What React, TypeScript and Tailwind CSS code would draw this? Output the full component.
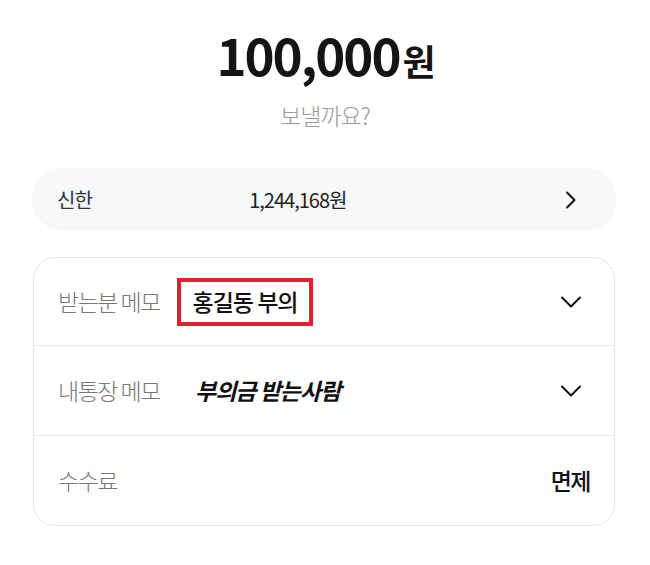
import React from "react";

const font = { fontFamily: '"Noto Sans CJK KR", "Noto Sans", sans-serif' };

const ChevronRight = () => (
  <svg width="16" height="18" viewBox="0 0 16 18" fill="none" stroke="#111" strokeWidth="2" strokeLinecap="round" strokeLinejoin="round">
    <path d="M4 1.5 11.5 9 4 16.5" />
  </svg>
);

const ChevronDown = () => (
  <svg width="22" height="14" viewBox="0 0 22 14" fill="none" stroke="#111" strokeWidth="2" strokeLinecap="round" strokeLinejoin="round">
    <path d="M2 2.5 11 11.5l9-9" />
  </svg>
);

const App = () => {
  return (
    <div className="min-h-[565px] w-[650px] bg-white" style={font}>
      <div className="flex flex-col items-center pt-[22px]">
        <div className="flex items-baseline text-[#141414] font-bold tracking-[-2px]">
          <span className="text-[51px] leading-[64px]">100,000</span>
          <span className="text-[36px] leading-[64px] ml-[3px]">원</span>
        </div>
        <p className="mt-[7px] text-[23px] leading-[32px] text-[#9a9a9a] font-light tracking-[-1px]">
          보낼까요?
        </p>
      </div>

      <div className="ml-[32px] mt-[37px] w-[585px] h-[63px] rounded-full bg-[#f7f8fa] flex items-center pl-[25px] pr-[38px]">
        <span className="text-[20px] text-[#333] tracking-[-0.8px]">신한</span>
        <span className="ml-[157px] text-[20px] text-[#222] tracking-[-1px]">1,244,168원</span>
        <span className="ml-auto">
          <ChevronRight />
        </span>
      </div>

      <div className="ml-[33px] mt-[26px] w-[582px] rounded-[22px] border border-[#e3e5e8] overflow-hidden">
        <div className="h-[88px] flex items-center pl-[24px] pr-[32px] border-b border-[#e6e8eb]">
          <span className="w-[120px] text-[23px] text-[#777] font-light tracking-[-1.5px]">받는분 메모</span>
          <span className="-ml-[1px] h-[48px] w-[136px] border-[4px] border-[#e3202b] flex items-center justify-center text-[23px] font-medium text-[#111] tracking-[-1px]">
            홍길동 부의
          </span>
          <span className="ml-auto">
            <ChevronDown />
          </span>
        </div>
        <div className="h-[90px] flex items-center pl-[24px] pr-[32px] border-b border-[#e6e8eb]">
          <span className="w-[137px] text-[23px] text-[#777] font-light tracking-[-1.5px]">내통장 메모</span>
          <span className="text-[23px] font-bold italic text-[#111] tracking-[-1px]">부의금 받는사람</span>
          <span className="ml-auto">
            <ChevronDown />
          </span>
        </div>
        <div className="h-[89px] flex items-center pl-[24px] pr-[24px]">
          <span className="text-[23px] text-[#777] font-light tracking-[-1.5px]">수수료</span>
          <span className="ml-auto text-[23px] font-medium text-[#111] tracking-[-1.5px]">면제</span>
        </div>
      </div>
    </div>
  );
};

export default App;
